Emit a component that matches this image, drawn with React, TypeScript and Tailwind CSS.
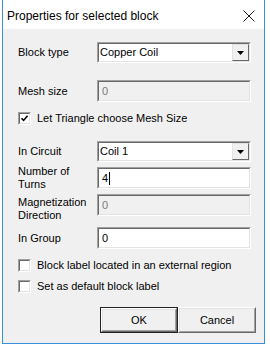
import React from "react";

const font = { fontFamily: '"Liberation Sans", Arial, sans-serif' };

function Sunken({ children, className = "", bg = "bg-white" }: { children?: React.ReactNode; className?: string; bg?: string }) {
  return (
    <div className={`border border-t-[#a0a0a0] border-l-[#a0a0a0] border-r-white border-b-white ${className}`}>
      <div className={`h-full w-full border border-t-[#696969] border-l-[#696969] border-r-[#e3e3e3] border-b-[#e3e3e3] ${bg}`}>
        {children}
      </div>
    </div>
  );
}

function TextBox({ value, disabled, cursor }: { value: string; disabled?: boolean; cursor?: boolean }) {
  return (
    <Sunken className="h-[22px] w-[154px] shrink-0" bg={disabled ? "bg-[#f0f0f0]" : "bg-white"}>
      <div className={`flex h-full items-center pl-[3px] text-[11px] ${disabled ? "text-[#7a7a7a]" : "text-black"}`}>
        <span>{value}</span>
        {cursor && <span className="ml-[1px] inline-block h-[13px] w-[1px] bg-black" />}
      </div>
    </Sunken>
  );
}

function Combo({ value }: { value: string }) {
  return (
    <Sunken className="h-[21px] w-[154px] shrink-0">
      <div className="flex h-full items-center justify-between">
        <span className="pl-[1px] text-[11px] text-black">{value}</span>
        <div className="flex h-[17px] w-[17px] items-center justify-center border border-t-[#e3e3e3] border-l-[#e3e3e3] border-r-[#696969] border-b-[#696969] bg-[#f0f0f0]">
          <svg width="7" height="4" viewBox="0 0 7 4">
            <path d="M0 0H7L3.5 4Z" fill="#000" />
          </svg>
        </div>
      </div>
    </Sunken>
  );
}

function Check({ checked, label, className = "" }: { checked?: boolean; label: string; className?: string }) {
  return (
    <div className={`flex h-[13px] items-center pl-[15px] ${className}`}>
      <Sunken className="h-[13px] w-[13px]">
        {checked && (
          <svg width="9" height="9" viewBox="0 0 9 9" className="block">
            <path d="M1.5 4.2L3.6 6.4L7.6 1.8" stroke="#000" strokeWidth="1.6" fill="none" />
          </svg>
        )}
      </Sunken>
      <span className="ml-[6px] text-[11px] leading-[13px] text-black">{label}</span>
    </div>
  );
}

function Button({ label, isDefault }: { label: string; isDefault?: boolean }) {
  const inner = (
    <div className="h-full w-full border border-t-white border-l-white border-r-[#696969] border-b-[#696969]">
      <div className="flex h-full w-full items-center justify-center border border-t-[#e3e3e3] border-l-[#e3e3e3] border-r-[#a0a0a0] border-b-[#a0a0a0] bg-[#f0f0f0] text-[11px] text-black">
        {label}
      </div>
    </div>
  );
  return isDefault ? (
    <div className="h-[26px] w-[78px] border border-[#222]">{inner}</div>
  ) : (
    <div className="h-[26px] w-[78px]">{inner}</div>
  );
}

function Row({ label, children, className = "" }: { label: React.ReactNode; children: React.ReactNode; className?: string }) {
  return (
    <div className={`flex items-center ${className}`}>
      <div className="w-[94px] shrink-0 pl-[15px] text-[11px] leading-[13px] text-black">{label}</div>
      {children}
    </div>
  );
}

export default function App() {
  return (
    <div className="h-[348px] w-[270px] bg-white" style={font}>
      <div className="ml-[2px] flex h-[344px] w-[263px] flex-col border-x border-b border-[#3a8fdc]">
        <div className="flex h-[29px] items-center justify-between bg-white pl-[4px] pr-[9px] pt-[3px]">
          <span className="text-[12px] text-black">Properties for selected block</span>
          <svg width="12" height="12" viewBox="0 0 12 12">
            <path d="M0.5 0.5L11.5 11.5M11.5 0.5L0.5 11.5" stroke="#1a1a1a" strokeWidth="1" />
          </svg>
        </div>
        <div className="flex flex-1 flex-col bg-[#f0f0f0]">
          <Row label="Block type" className="mt-[13px] h-[21px]">
            <Combo value="Copper Coil" />
          </Row>
          <Row label="Mesh size" className="mt-[17px] h-[22px]">
            <TextBox value="0" disabled />
          </Row>
          <Check checked label="Let Triangle choose Mesh Size" className="mt-[10px]" />
          <Row label="In Circuit" className="mt-[16px] h-[21px]">
            <Combo value="Coil 1" />
          </Row>
          <Row label={<>Number of<br />Turns</>} className="mt-[5px] h-[22px]">
            <TextBox value="4" cursor />
          </Row>
          <Row label={<span className="relative top-[4px] block">Magnetization<br />Direction</span>} className="mt-[5px] h-[22px]">
            <TextBox value="0" disabled />
          </Row>
          <Row label="In Group" className="mt-[11px] h-[22px]">
            <TextBox value="0" />
          </Row>
          <Check label="Block label located in an external region" className="mt-[10px]" />
          <Check label="Set as default block label" className="mt-[8px]" />
          <div className="mt-[14px] flex justify-end pr-[8px]">
            <Button label="OK" isDefault />
            <Button label="Cancel" />
          </div>
        </div>
      </div>
    </div>
  );
}
